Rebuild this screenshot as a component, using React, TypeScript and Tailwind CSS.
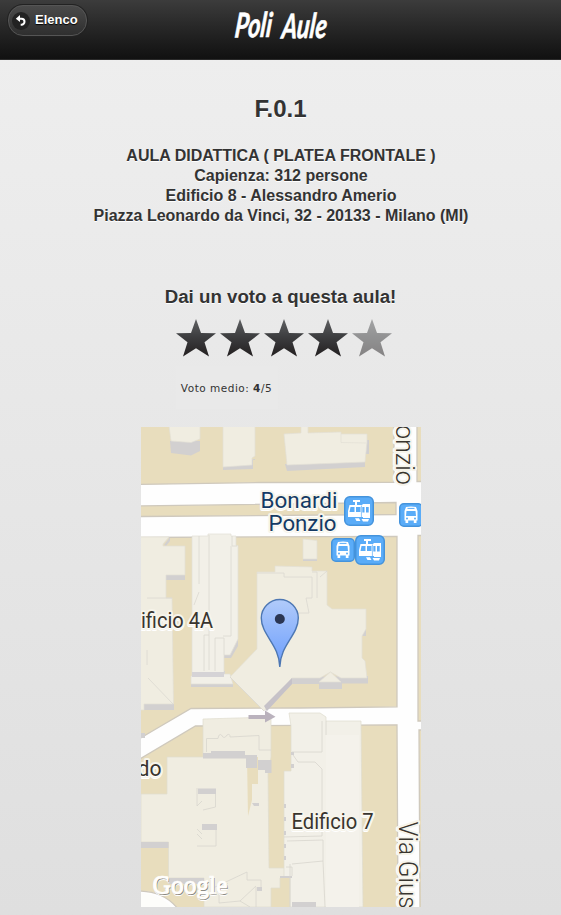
const star = "M20 0 L25 14 L40 14.300 L28.500 23.300 L33 37.500 L20 29.300 L7 37.500 L11.500 23.300 L0 14.300 L15 14 Z";

function Star({ faded = false }: { faded?: boolean }) {
  return (
    <svg className={faded ? "h-[38px] w-10 opacity-50" : "h-[38px] w-10"} viewBox="0 0 40 38">
      <defs>
        <linearGradient id="starFill" x1="0" y1="0" x2="0" y2="1">
          <stop offset="0" stopColor="#606163" />
          <stop offset="0.45" stopColor="#3e3f41" />
          <stop offset="1" stopColor="#231f20" />
        </linearGradient>
      </defs>
      <path d={star} fill="url(#starFill)" />
    </svg>
  );
}

function Badge({ x, y, s }: { x: number; y: number; s: number }) {
  return (
    <rect x={x + 0.75} y={y + 0.75} width={s - 1.5} height={s - 1.5} rx={s * 0.17} fill="#5aacf8" stroke="#4493dc" strokeWidth="1.5" />
  );
}

function Tram({ x, y }: { x: number; y: number }) {
  return (
    <g>
      <Badge x={x} y={y} s={30} />
      <g transform={`translate(${x} ${y})`} fill="#fff">
        <path d="M9 4 H16 V6 H13 V9 H18.500 V8 H26 V22 H19 V21 H4 V15 L5.500 9 H11 V6 H9 Z" />
        <path d="M6.500 11 H10.500 V16 H5.500 Z M12 11 H16.500 V16 H12 Z M18.300 11 H20.500 V16.500 H18.300 Z M22 11 H24.700 V16.500 H22 Z" fill="#5aacf8" />
        <path d="M17.400 9.500 V21" stroke="#5aacf8" strokeWidth=".7" />
        <path d="M11 22.300 H15 L16.500 25 H12.500 Z M17.500 23 H25 L24 25.500 H19 Z" />
      </g>
    </g>
  );
}

function Bus({ x, y }: { x: number; y: number }) {
  return (
    <g>
      <Badge x={x} y={y} s={24} />
      <g transform={`translate(${x} ${y})`}>
        <path d="M7 4 Q12 2.8 17 4 L18.5 8 V17.5 H17.5 V20 H14.8 V17.5 H9.2 V20 H6.5 V17.5 H5.5 V8 Z" fill="#fff" />
        <path d="M8.5 5.4 H15.5" stroke="#5aacf8" strokeWidth="1" />
        <path d="M7.5 8 H16.5 L17 13 H7 Z" fill="#5aacf8" />
        <circle cx="8" cy="15.4" r="1" fill="#5aacf8" />
        <circle cx="16" cy="15.4" r="1" fill="#5aacf8" />
      </g>
    </g>
  );
}

function CampusMap() {
  return (
    <svg className="block h-[480px] w-[280px]" viewBox="141 427 280 480">
      <defs>
        <linearGradient id="pinFill" x1="0" y1="0" x2="0" y2="1">
          <stop offset="0" stopColor="#b1cbfa" />
          <stop offset="1" stopColor="#6b9dfc" />
        </linearGradient>
      </defs>
      <rect x="141" y="427" width="280" height="480" fill="#fefefe" />
      <g fill="#e8ddbd" stroke="#cfc9bd" strokeWidth="1.3">
        <path d="M139 425 H394 V482.3 L260 482.5 L139 484.5 Z" />
        <path d="M139 506 L396 502.5 V514.5 L139 516.5 Z" />
        <path d="M139 537.5 L397 536.3 V706.8 L300 708 L191 708.5 L155 729.5 L139 739 Z" />
        <path d="M139 759.5 L195.5 726 L397 724.8 L398 909 H178 C168 896 155 891 139 891 Z" />
        <path d="M417 425 H423 V481.5 H417 Z M418 535.5 H423 V721 H418 Z M419 730 H423 V909 H420 Z" />
      </g>
      <path d="M139 893 Q160 893 173 909 H139 Z" fill="#fdfdfa" />

      <g fill="#d2d0d0">
        <path d="M170 441 L200 441 V451 L191 455.5 L171 453 Z M223 465 L255 459 V460 H253 V469 L223 470 Z" />
        <path d="M285 464 L365 461 V467 L287 471 Z M365 440 H369 V454 H365 Z M303 556 L317 558 V561 H303 Z" />
        <path d="M166 574 H185 V580 H166 Z M164 545 L170 537 V541 L166 546 Z M143 704 H174 V710 H143 Z" />
        <path d="M192 671 H225 V677 H192 Z M191 683 H233 V687 H191 Z M224 653 L232 650 L238 638 V646 L231 658 H224 Z" />
        <path d="M292 677 L368 676 V683.5 H342 V689 H319 V684 H292 L266 711 L264 706 Z M362 629 H366 V636 H362 Z" />
      </g>
      <g fill="#f0ede1" stroke="#e2dfd5" strokeWidth=".7">
        <path d="M169 426 H200 V439 L191 442.5 L171 441 Z" />
        <path d="M223 426 H255 V456 L252 458 V465 L223 467 Z" />
        <path d="M301 426 H308 V433 L341 432 V434 L367 434 L367 442 L365 462 L287 465 L284 434 L301 433 Z" />
        <path d="M341 434 V442.5 L366 443" fill="none" />
        <path d="M303 539 L317 540.5 V559 H303 Z" />
        <path d="M140 537 H169 L163 544 V546 H185 V575 H166 V598 H172 L173.5 704 H144 V710 H140 Z" />
        <path d="M192 536 H208 V534 H231 V536 H236 V545.5 H238 V639 L230 655 H224 V674 H230 L233 684 H191 V676 H192 Z" fill="#f2f0e8" />
        <path d="M257 572 H275 V566 L312 567 V571 L327 571 V605 L332 609 H366 V629 L362 636 V658 L365 661 L367 678 H341 L330.5 672 L320 678 H292 L264 711 L230 677 L257 649 Z" />
        <path d="M319 682 L330.5 672 L341 682 Z" />
      </g>
      <path d="M192 672 H224 V677 H192 Z" fill="#d5d3d6" />
      <g fill="none" stroke="#dad8d1" strokeWidth=".8">
        <path d="M199 536 V584 M209 535 V670 M232 536 V546 H237 M199 592 L194 605 M204 671 V635 H209 M215 671 V638 H224 V655 M231 546 V636 H223 M147 598 H172 M148 678 L173 704 M147 650 V665" />
        <path d="M257 573 H284 V577 H312 V598 H306 L309 613 H296 M312 572 H317 V598 M327 571 L320 577 M230 677 L264 711" />
      </g>

      <g fill="#f0ede1" stroke="#dfdccf" strokeWidth=".7">
        <path d="M203 719 L271 717 V757 L268 774 L269 868 H286 V876 L280 878 V888 H271 V907 H204 V878 H168.5 V842 H141 V794 H167 V757 H203 Z" />
        <path d="M289 713 H320 L326 717 V721 H361 L363 907 H290 V877 H284 V771 L291 771 V726 Z" fill="#f2f0e8" />
        <path d="M326 735 H359 V907 H326 Z" fill="#f4f2eb" stroke="none" />
      </g>
      <path d="M247 757 H258 V784 H252 V800 L248 816 Z" fill="#e8ddbd" />
      <g fill="#d2d0d0">
        <path d="M203 753 V758.500 H246 V768 H257 V755 H245 V751 H211 V753 Z M258 760 H271.5 V773 H265 V770 H258 Z" />
        <path d="M198 788.5 H216 V794 H198 Z M202 824 H217 V830 H202 Z M141 842 H168.5 V848 H141 Z M168.5 878 H204 V884 H168.5 Z" />
        <path d="M252 803 H259 V806 H254 Z M257 887 H262 V891 H257 Z M292 902 H316 V907 H292 Z M141 733 H145 V738 H141 Z" />
        <path d="M291 752 H294 V755 H291 Z M291 764 H294 V768 H291 Z M284 804 H286 V808 H284 Z M284 817 H286 V821 H284 Z M284 831 H286 V835 H284 Z M284 844 H286 V848 H284 Z M284 856 H286 V860 H284 Z M280 876 H292 V878 H280 Z" />
      </g>
      <g fill="none" stroke="#d8d6ce" strokeWidth=".8">
        <path d="M206.500 752 V738.500 H218 Q219 733 221.500 735 Q224 740 227 735 Q230 733 230 737 L259 735.500 V750 H271" />
        <path d="M197 788 V806 L202 801 M215.500 794 V807 L203 810 M216 830 V846 H197 M197 829 L202 834 M197 834 L202 839" />
        <path d="M213 888 L247 872 V880 H261 V887 M217 892 L228 883 M219 903 L240 901 L256 886 M240 901 L250 907 M219 891 V903 M256 887 V907" />
        <path d="M292 752 H322 V721 M293 755 L298 762 H315 L322 769 V836 M326 721 V735 M284 837 L322 836 M287 841 L323 840 V861 L292 864 M290 864 V907 M323 861 L325 907 M286 867 H292 V876" />
      </g>

      <path d="M248.500 715 H265 V710.500 L275.500 716.800 L265 722.500 V719 H248.500 Z" fill="#bab2bd" />
      <path d="M264 706 L292 678 V684 L267 711 Z" fill="#c6c2c8" />

      <g fontFamily="Roboto, sans-serif" stroke="#f6f4ea" strokeWidth="4" strokeLinejoin="round" paintOrder="stroke">
        <g fill="#143a64" fontSize="22">
          <text x="260.500" y="507.500" textLength="77" lengthAdjust="spacingAndGlyphs">Bonardi</text>
          <text x="268.500" y="531" textLength="68" lengthAdjust="spacingAndGlyphs">Ponzio</text>
        </g>
        <g fill="#39352e" fontSize="21.500">
          <text x="141" y="627.500" textLength="72" lengthAdjust="spacingAndGlyphs">ificio 4A</text>
          <text x="137.500" y="775.500" textLength="24" lengthAdjust="spacingAndGlyphs">do</text>
          <text x="291.500" y="828.500" textLength="82" lengthAdjust="spacingAndGlyphs">Edificio 7</text>
          <text transform="translate(396 425) rotate(90)" fontSize="26" fontWeight="300" textLength="60" lengthAdjust="spacingAndGlyphs">onzio</text>
          <text transform="translate(399 821.500) rotate(90)" fontSize="26" fontWeight="300" textLength="87" lengthAdjust="spacingAndGlyphs">Via Gius</text>
        </g>
      </g>

      <Tram x={344} y={496} />
      <Bus x={399} y={503} />
      <Bus x={331} y={538} />
      <Tram x={355} y={535} />

      <path d="M279.800 667 C279.500 645 261.300 635 261.300 618 A18.500 18.500 0 0 1 298.300 618 C298.300 635 280.200 645 279.800 667 Z" fill="url(#pinFill)" stroke="#4d77b3" strokeWidth="1.400" />
      <circle cx="279.800" cy="619" r="5" fill="#2b3653" />

      <g fontFamily="'Liberation Serif', serif" fontSize="26">
        <text x="153.500" y="894.500" fill="#8d8a83" textLength="75" lengthAdjust="spacingAndGlyphs">Google</text>
        <text x="152.500" y="893" fill="#fffefc" stroke="#fffefc" strokeWidth=".3" textLength="75" lengthAdjust="spacingAndGlyphs">Google</text>
      </g>
    </svg>
  );
}

export default function App() {
  return (
    <div className="flex h-[915px] w-[561px] flex-col overflow-hidden bg-gradient-to-b from-[#efefef] to-[#dfdfdf] font-['Liberation_Sans',Arial,sans-serif] text-[#333]">
      <header className="grid h-[60px] shrink-0 grid-cols-3 items-start border-b border-[#2a2a2a] bg-gradient-to-b from-[#3c3c3c] to-[#111]">
        <button className="mt-[5px] ml-2 flex h-[31px] w-[79px] items-center rounded-[15px] border border-[#555] bg-gradient-to-b from-[#4a4a4a] to-[#2f2f2f] pl-[3px] text-[13px] font-bold text-white shadow-[0_0_0_1px_#222] [text-shadow:0_1px_1px_#000]">
          <svg className="mr-[5px] h-[18px] w-[18px] shrink-0" viewBox="0 0 18 18">
            <circle cx="9" cy="9" r="9" fill="#222" />
            <path d="M6 6.700 H9.500 A3 3 0 0 1 9.500 12.700 H8.700" fill="none" stroke="#fff" strokeWidth="2" />
            <path d="M3.800 6.700 L8 3 V10 Z" fill="#fff" />
          </svg>
          <span className="-mt-[2px]">Elenco</span>
        </button>
        <svg className="h-[54px] w-[130px] justify-self-center" viewBox="216 0 130 54">
          <g fontFamily="Lato, sans-serif" fontWeight="700" fontStyle="italic" fill="#fff" stroke="#fff" strokeWidth=".6">
            <text transform="translate(234 37.500) rotate(-1) skewX(-7)" fontSize="34" textLength="37" lengthAdjust="spacingAndGlyphs">Poli</text>
            <text transform="translate(281 38.500) rotate(-1) skewX(-7)" fontSize="34" textLength="45" lengthAdjust="spacingAndGlyphs">Aule</text>
          </g>
        </svg>
      </header>
      <main className="flex flex-col items-center text-center [text-shadow:0_1px_0_#fff]">
        <h1 className="mt-[34px] text-2xl leading-[30px] font-bold">F.0.1</h1>
        <div className="mt-[22px] pl-px text-base leading-5 font-bold whitespace-nowrap">
          <p>AULA DIDATTICA ( PLATEA FRONTALE )</p>
          <p>Capienza: 312 persone</p>
          <p>Edificio 8 - Alessandro Amerio</p>
          <p>Piazza Leonardo da Vinci, 32 - 20133 - Milano (MI)</p>
        </div>
        <h2 className="mt-[59px] text-[18.700px] leading-6 font-bold whitespace-nowrap">Dai un voto a questa aula!</h2>
        <div className="mt-[10px] ml-[7px] flex w-[216px] gap-1">
          <Star />
          <Star />
          <Star />
          <Star />
          <Star faded />
        </div>
        <div className="mt-[9px] mr-[108px] flex h-[43px] w-[102px] items-center justify-center bg-[#e9e9e9] pt-[2px] font-['DejaVu_Sans',sans-serif] text-[10.500px] tracking-[0.500px] whitespace-pre [text-shadow:none]">
          Voto medio: <b>4</b>/5
        </div>
        <div className="mt-[18px]">
          <CampusMap />
        </div>
      </main>
    </div>
  );
}
